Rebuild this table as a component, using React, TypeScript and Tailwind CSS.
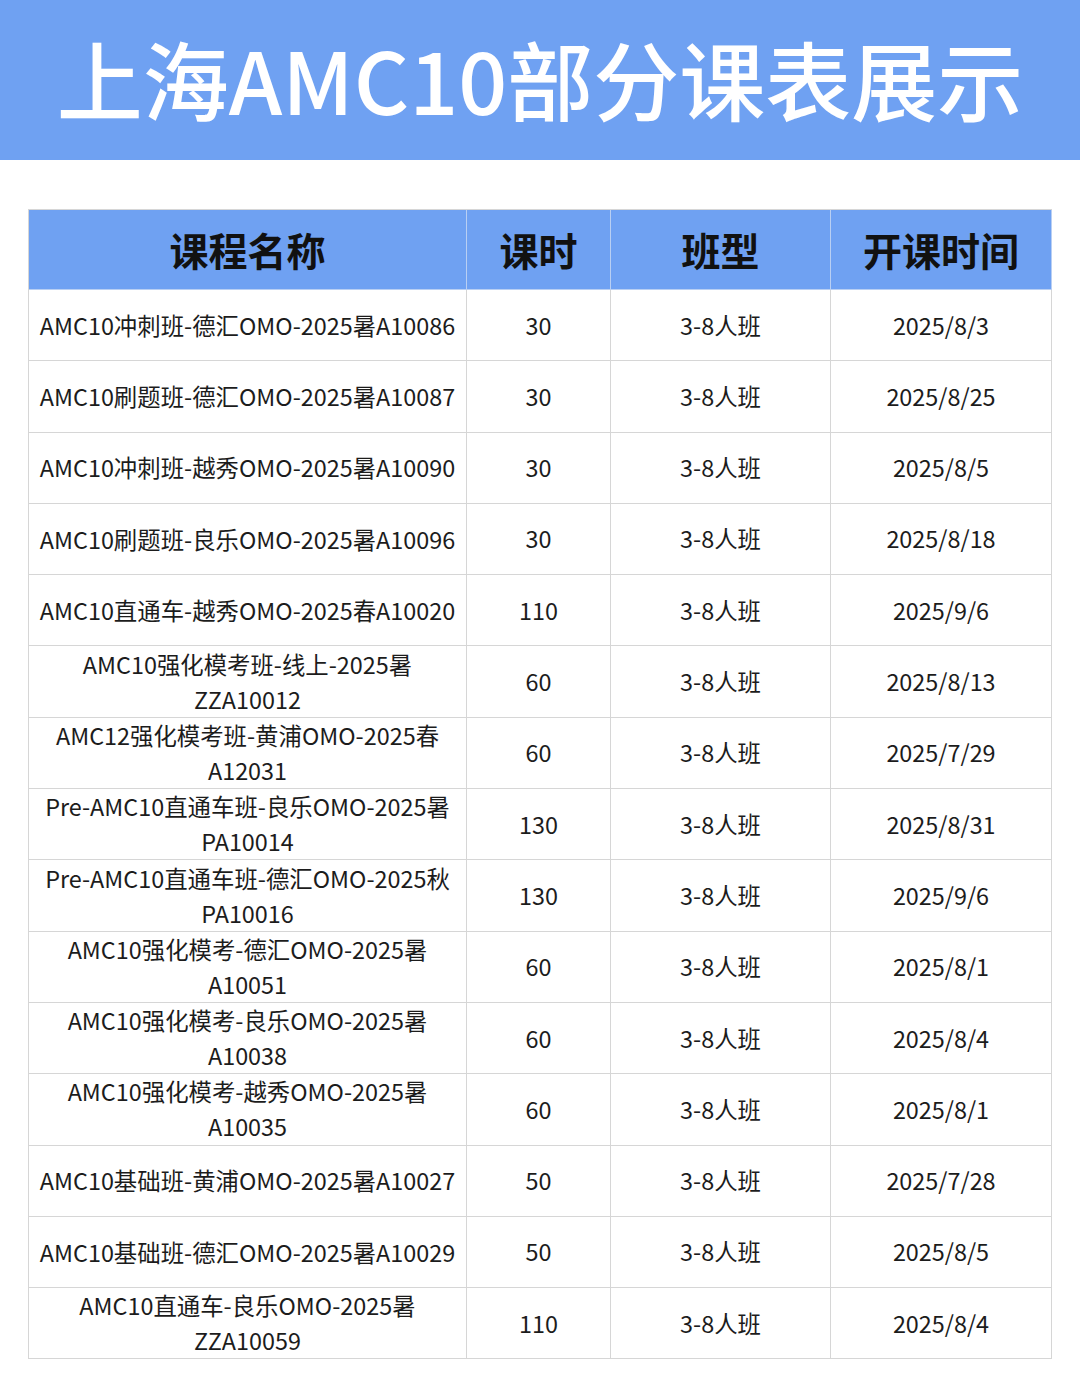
const rows: [string[], string, string, string][] = [
  [["AMC10冲刺班-德汇OMO-2025暑A10086"], "30", "3-8人班", "2025/8/3"],
  [["AMC10刷题班-德汇OMO-2025暑A10087"], "30", "3-8人班", "2025/8/25"],
  [["AMC10冲刺班-越秀OMO-2025暑A10090"], "30", "3-8人班", "2025/8/5"],
  [["AMC10刷题班-良乐OMO-2025暑A10096"], "30", "3-8人班", "2025/8/18"],
  [["AMC10直通车-越秀OMO-2025春A10020"], "110", "3-8人班", "2025/9/6"],
  [["AMC10强化模考班-线上-2025暑", "ZZA10012"], "60", "3-8人班", "2025/8/13"],
  [["AMC12强化模考班-黄浦OMO-2025春", "A12031"], "60", "3-8人班", "2025/7/29"],
  [["Pre-AMC10直通车班-良乐OMO-2025暑", "PA10014"], "130", "3-8人班", "2025/8/31"],
  [["Pre-AMC10直通车班-德汇OMO-2025秋", "PA10016"], "130", "3-8人班", "2025/9/6"],
  [["AMC10强化模考-德汇OMO-2025暑", "A10051"], "60", "3-8人班", "2025/8/1"],
  [["AMC10强化模考-良乐OMO-2025暑", "A10038"], "60", "3-8人班", "2025/8/4"],
  [["AMC10强化模考-越秀OMO-2025暑", "A10035"], "60", "3-8人班", "2025/8/1"],
  [["AMC10基础班-黄浦OMO-2025暑A10027"], "50", "3-8人班", "2025/7/28"],
  [["AMC10基础班-德汇OMO-2025暑A10029"], "50", "3-8人班", "2025/8/5"],
  [["AMC10直通车-良乐OMO-2025暑", "ZZA10059"], "110", "3-8人班", "2025/8/4"],
];

const headers = ["课程名称", "课时", "班型", "开课时间"];

export default function App() {
  return (
    <div
      className="w-[1080px] h-[1380px] bg-white"
      style={{ fontFamily: '"Noto Sans CJK SC", "Noto Sans", sans-serif' }}
    >
      <header className="h-[160px] bg-[#6fa1f2] flex items-center justify-center">
        <h1 className="text-white text-[86px] font-medium leading-none pb-[4px]">
          上海AMC10部分课表展示
        </h1>
      </header>

      <div className="mt-[49px] ml-[28px] w-[1024px] border-l border-t border-[#d6d6d6]">
        <div className="grid grid-cols-[438px_144px_220px_221px] h-[80px] bg-[#6fa1f2]">
          {headers.map((h) => (
            <div
              key={h}
              className="flex items-center justify-center border-r border-b border-[#b9cff3] text-[#111] text-[39px] font-bold leading-none"
            >
              {h}
            </div>
          ))}
        </div>
        {rows.map(([name, hours, type, date], i) => (
          <div
            key={i}
            className="grid grid-cols-[438px_144px_220px_221px] h-[71.3px] text-[23.4px] text-[#1c1c1c]"
          >
            <div className="flex flex-col items-center justify-center border-r border-b border-[#d6d6d6] leading-[35px] whitespace-nowrap">
              {name.map((l) => (
                <span key={l}>{l}</span>
              ))}
            </div>
            <div className="flex items-center justify-center border-r border-b border-[#d6d6d6]">
              {hours}
            </div>
            <div className="flex items-center justify-center border-r border-b border-[#d6d6d6]">
              {type}
            </div>
            <div className="flex items-center justify-center border-r border-b border-[#d6d6d6]">
              {date}
            </div>
          </div>
        ))}
      </div>
    </div>
  );
}
